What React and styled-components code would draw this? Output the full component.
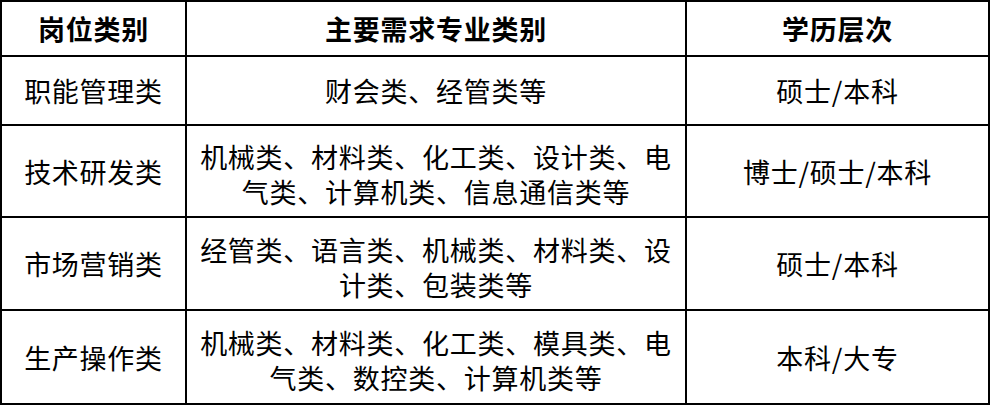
import React from "react";
import styled, { createGlobalStyle } from "styled-components";

const GlobalStyle = createGlobalStyle`
  html, body {
    margin: 0;
    padding: 0;
    background: #ffffff;
  }
  body {
    font-family: "Noto Sans CJK SC", "Noto Sans", sans-serif;
    color: #000000;
  }
`;

const Grid = styled.div`
  display: grid;
  grid-template-columns: 183px 498px 301px;
  grid-template-rows: 53px 67px 90px 91px 92px;
  gap: 2px;
  padding: 2px;
  width: 990px;
  height: 405px;
  box-sizing: border-box;
  background: #000000;
`;

const Cell = styled.div`
  background: #ffffff;
  display: flex;
  flex-direction: column;
  align-items: center;
  justify-content: center;
  font-size: 27px;
  letter-spacing: 0.75px;
  line-height: 35px;
  font-weight: ${(props) => (props.$head ? 700 : 400)};
  padding-top: ${(props) => (props.$multi ? "6px" : "0")};
  box-sizing: border-box;
  white-space: nowrap;
`;

const Line = styled.span`
  display: block;
`;

const header = ["岗位类别", "主要需求专业类别", "学历层次"];

const rows = [
  { post: "职能管理类", major: ["财会类、经管类等"], degree: "硕士/本科" },
  {
    post: "技术研发类",
    major: ["机械类、材料类、化工类、设计类、电", "气类、计算机类、信息通信类等"],
    degree: "博士/硕士/本科",
  },
  {
    post: "市场营销类",
    major: ["经管类、语言类、机械类、材料类、设", "计类、包装类等"],
    degree: "硕士/本科",
  },
  {
    post: "生产操作类",
    major: ["机械类、材料类、化工类、模具类、电", "气类、数控类、计算机类等"],
    degree: "本科/大专",
  },
];

export default function App() {
  return (
    <>
      <GlobalStyle />
      <Grid>
        {header.map((h) => (
          <Cell key={h} $head>
            {h}
          </Cell>
        ))}
        {rows.map((r) => (
          <React.Fragment key={r.post}>
            <Cell>{r.post}</Cell>
            <Cell $multi={r.major.length > 1}>
              {r.major.map((m) => (
                <Line key={m}>{m}</Line>
              ))}
            </Cell>
            <Cell>{r.degree}</Cell>
          </React.Fragment>
        ))}
      </Grid>
    </>
  );
}
